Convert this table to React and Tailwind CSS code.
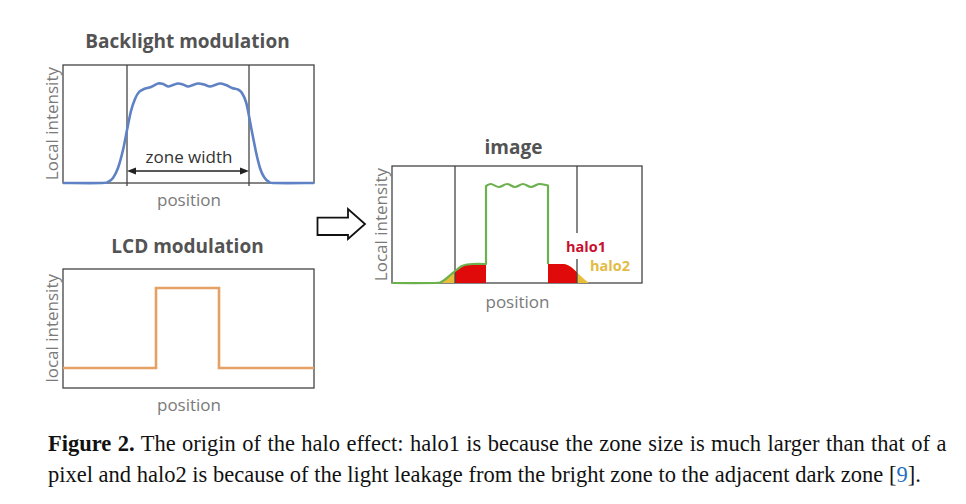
// Figure 2: halo effect of local dimming (backlight, LCD and resulting image)

const smooth = (pts, start = "M") => {
  const f = (p) => `${p[0].toFixed(1)},${p[1].toFixed(1)}`;
  let d = `${start}${f(pts[0])}`;
  for (let i = 0; i < pts.length - 1; i++) {
    const p0 = pts[i - 1] || pts[i];
    const p1 = pts[i];
    const p2 = pts[i + 1];
    const p3 = pts[i + 2] || p2;
    const c1 = [p1[0] + (p2[0] - p0[0]) / 6, p1[1] + (p2[1] - p0[1]) / 6];
    const c2 = [p2[0] - (p3[0] - p1[0]) / 6, p2[1] - (p3[1] - p1[1]) / 6];
    d += ` C${f(c1)} ${f(c2)} ${f(p2)}`;
  }
  return d;
};

const backlightPts = [
  [1, 119], [40, 119], [46, 118], [51, 114], [56, 104], [61, 86], [65, 66], [69, 47],
  [73, 35], [77, 28], [82, 25], [89, 23], [96, 19.5], [101, 20], [106, 22.5], [111, 21],
  [116, 19.5], [121, 20.5], [126, 22.5], [131, 21], [136, 19.5], [142, 20.5], [148, 22.5],
  [153, 21], [158, 19.5], [164, 21], [170, 24], [176, 25.5], [180, 29], [184, 38],
  [187, 52], [190, 68], [194, 88], [198, 104], [202, 113], [207, 118], [213, 119], [252, 119],
];

const leftShoulder = [
  [1, 118], [44, 118], [49, 117.5], [54, 114.5], [60, 109.5], [66, 104.5], [71, 101],
  [76, 99.5], [82, 99], [95, 99],
];
const topWave = [
  [95, 21], [100, 19], [108, 22], [116, 19], [124, 22], [132, 19], [140, 22], [148, 19], [157, 20.5],
];
const rightShoulder = [
  [157, 99], [170, 99], [175, 99.5], [180, 102], [186, 107.5], [192, 113], [197, 117],
  [202, 118], [251, 118],
];

const greenPath = `${smooth(leftShoulder)} L95,21 ${smooth(topWave, "L").slice(1 + 9)} L157,99 ${smooth(rightShoulder, "L").slice(1 + 9)}`;
const leftArea = `${smooth(leftShoulder)} L95,118 Z`;
const rightArea = `${smooth(rightShoulder)} L157,118 Z`;

function YLabel({ text }) {
  return (
    <div className="flex h-[120px] w-[21px] items-center justify-center self-start">
      <span className="rotate-180 whitespace-nowrap text-[17px] leading-none text-[#7a7a7a] [writing-mode:vertical-rl]">
        {text}
      </span>
    </div>
  );
}

function Panel({ title, ylabel, titleClass, chartClass, labelClass, children }) {
  return (
    <div className="flex flex-col">
      <div className="pl-[21px]">
        <div className={`h-[24px] text-center text-[19px] font-bold leading-[24px] text-[#535353] ${titleClass}`}>
          {title}
        </div>
      </div>
      <div className={`flex ${chartClass}`}>
        <YLabel text={ylabel} />
        <div className="relative">{children}</div>
      </div>
      <div className={`pl-[21px] ${labelClass}`}>
        <div className="h-[20px] text-center text-[17px] leading-[20px] text-[#7a7a7a]">position</div>
      </div>
    </div>
  );
}

function BacklightChart() {
  return (
    <>
      <svg width="254" height="124" viewBox="0 0 254 124" className="block">
        <rect x="1" y="1" width="251" height="118" fill="none" stroke="#444" strokeWidth="1.3" />
        <line x1="65" y1="1" x2="65" y2="122" stroke="#444" strokeWidth="1.3" />
        <line x1="187" y1="1" x2="187" y2="122" stroke="#444" strokeWidth="1.3" />
        <path d={smooth(backlightPts)} fill="none" stroke="#5f82c4" strokeWidth="2.6" strokeLinejoin="round" />
        <line x1="72" y1="107" x2="180" y2="107" stroke="#222" strokeWidth="1.4" />
        <path d="M65,107 L74,103.5 L74,110.5 Z" fill="#222" />
        <path d="M187,107 L178,103.5 L178,110.5 Z" fill="#222" />
      </svg>
      <div className="absolute inset-x-0 top-[84px] text-center text-[17px] leading-[18px] text-[#333]">zone width</div>
    </>
  );
}

function LcdChart() {
  return (
    <svg width="254" height="124" viewBox="0 0 254 124" className="block">
      <rect x="1" y="1" width="251" height="119" fill="none" stroke="#444" strokeWidth="1.3" />
      <path d="M1,100 H94 V20 H157 V100 H252" fill="none" stroke="#e3a163" strokeWidth="2.6" strokeLinejoin="miter" />
    </svg>
  );
}

function ImageChart() {
  return (
    <>
      <svg width="253" height="124" viewBox="0 0 253 124" className="block">
        <defs>
          <clipPath id="redLeft">
            <rect x="64" y="0" width="31" height="120" />
          </clipPath>
          <clipPath id="redRight">
            <rect x="157" y="0" width="29" height="120" />
          </clipPath>
        </defs>
        <rect x="1" y="1" width="250" height="117" fill="none" stroke="#444" strokeWidth="1.3" />
        <path d={leftArea} fill="#e8bd3a" />
        <path d={rightArea} fill="#e8bd3a" />
        <path d={leftArea} fill="#e10a0a" clipPath="url(#redLeft)" />
        <path d={rightArea} fill="#e10a0a" clipPath="url(#redRight)" />
        <line x1="64" y1="1" x2="64" y2="118" stroke="#444" strokeWidth="1.3" />
        <line x1="186" y1="1" x2="186" y2="68" stroke="#444" strokeWidth="1.3" />
        <line x1="186" y1="94" x2="186" y2="118" stroke="#444" strokeWidth="1.3" />
        <path d={greenPath} fill="none" stroke="#6db14f" strokeWidth="2.2" strokeLinejoin="round" />
      </svg>
      <div className="absolute left-[175px] top-[72px] text-[14.5px] font-bold leading-[20px] text-[#c8102e]">halo1</div>
      <div className="absolute left-[199px] top-[91px] text-[14.5px] font-bold leading-[20px] text-[#e3bb45]">halo2</div>
    </>
  );
}

export default function App() {
  return (
    <div className="h-[504px] w-[966px] overflow-hidden bg-white font-['Open_Sans',sans-serif]">
      <div className="flex h-[420px] items-start">
        <div className="ml-[41px] mt-[29px] flex flex-col">
          <Panel title="Backlight modulation" ylabel="Local intensity" titleClass="pr-[3px]" chartClass="mt-[11px]" labelClass="mt-[2px]">
            <BacklightChart />
          </Panel>
          <div className="mt-[24px]">
            <Panel title="LCD modulation" ylabel="local intensity" titleClass="pr-[3px]" chartClass="mt-[10px]" labelClass="mt-[3px]">
              <LcdChart />
            </Panel>
          </div>
        </div>

        <svg width="54" height="36" viewBox="0 0 54 36" className="mt-[206px] block shrink-0">
          <path d="M1.5,11.7 H32 V3 L49,18 L32,33 V29 H1.5 Z" fill="white" stroke="#111" strokeWidth="1.8" strokeLinejoin="miter" />
        </svg>

        <div className="mt-[135px]">
          <Panel title="image" ylabel="Local intensity" titleClass="pr-[8px]" chartClass="mt-[6px]" labelClass="mt-[3px]">
            <ImageChart />
          </Panel>
        </div>
      </div>

      <div className="ml-[48px] mt-[8px] font-['Liberation_Serif',serif] text-[22.5px] leading-[31px] text-[#111]">
        <div className="whitespace-nowrap [word-spacing:0.8px]">
          <span className="font-bold">Figure 2.</span> The origin of the halo effect: halo1 is because the zone size is much larger than that of a
        </div>
        <div className="whitespace-nowrap">
          pixel and halo2 is because of the light leakage from the bright zone to the adjacent dark zone [<span className="text-[#1f70c1]">9</span>].
        </div>
      </div>
    </div>
  );
}
